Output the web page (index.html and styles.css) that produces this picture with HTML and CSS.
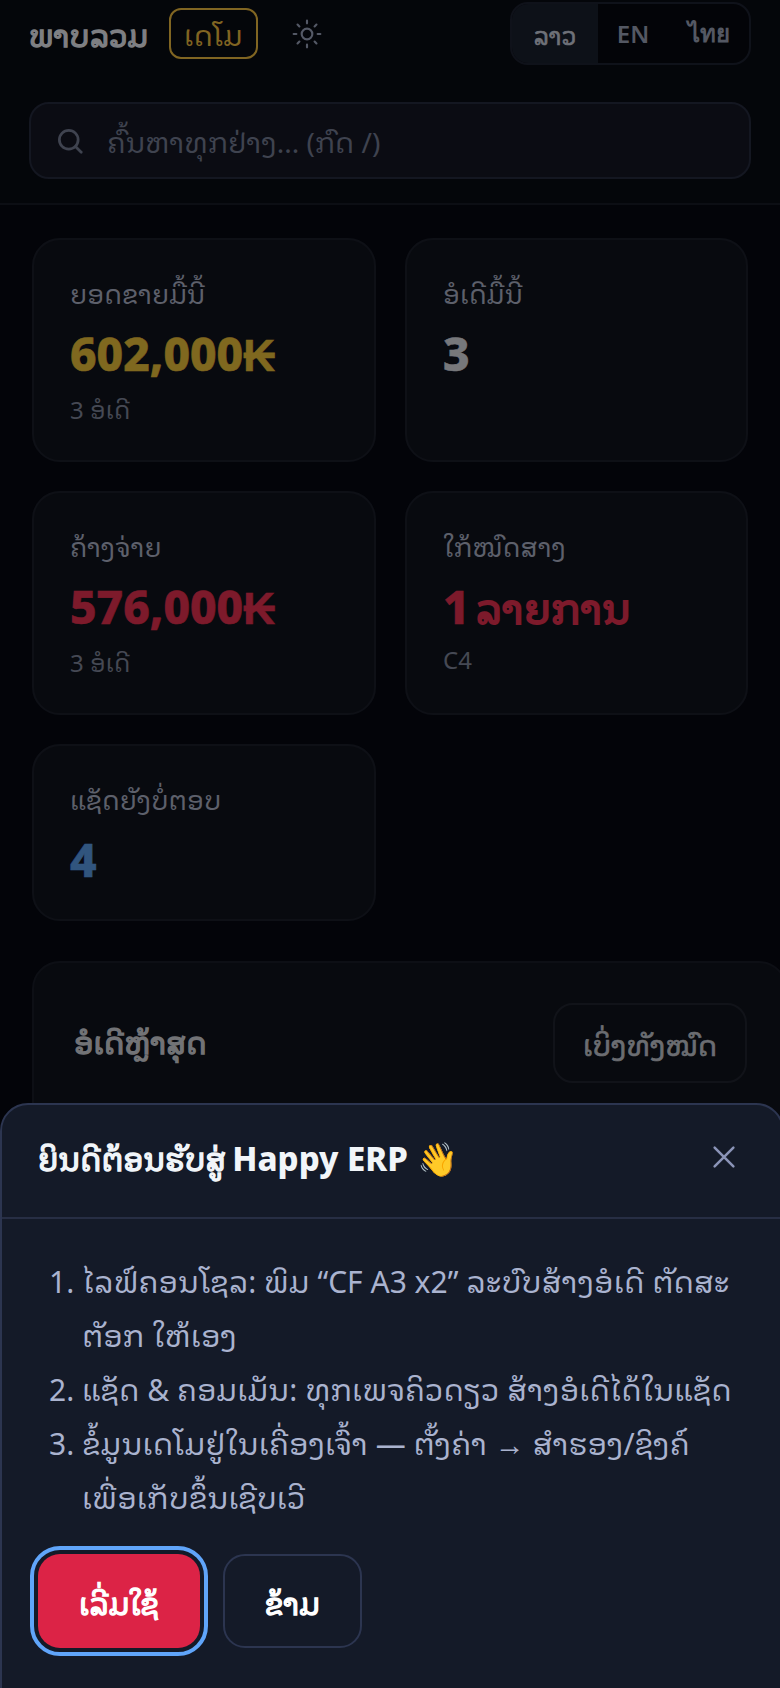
FILE: index.html
```html
<!DOCTYPE html>
<html lang="lo">
<head>
<meta charset="utf-8">
<title>Happy ERP</title>
<link rel="stylesheet" href="styles.css">
</head>
<body>
<div class="page">
  <header class="topbar">
    <div class="toprow">
      <h1 class="title lao-bold">ພາບລວມ</h1>
      <span class="demo">ເດໂມ</span>
      <button class="sun" aria-label="theme">
        <svg viewBox="0 0 24 24" width="32" height="32" fill="none" stroke="currentColor" stroke-width="1.6" stroke-linecap="round"><circle cx="12" cy="12" r="4"/><path d="M12 2v2M12 20v2M4.9 4.9l1.4 1.4M17.7 17.7l1.4 1.4M2 12h2M20 12h2M6.3 17.7l-1.4 1.4M19.1 4.9l-1.4 1.4"/></svg>
      </button>
      <div class="langs">
        <span class="lang active lao-semi">ລາວ</span>
        <span class="lang">EN</span>
        <span class="lang">ไทย</span>
      </div>
    </div>
    <div class="search">
      <svg viewBox="0 0 24 24" width="30" height="30" fill="none" stroke="currentColor" stroke-width="2.2" stroke-linecap="round"><circle cx="11" cy="11" r="7.5"/><path d="M21 21l-4.6-4.6"/></svg>
      <span class="placeholder">ຄົ້ນຫາທຸກຢ່າງ... (ກົດ /)</span>
    </div>
  </header>
  <main class="content">
    <section class="stats">
      <article class="stat tall">
        <div class="label">ຍອດຂາຍມື້ນີ້</div>
        <div class="value gold">602,000<span class="kip">₭</span></div>
        <div class="sub">3 ອໍເດີ</div>
      </article>
      <article class="stat tall">
        <div class="label">ອໍເດີມື້ນີ້</div>
        <div class="value">3</div>
      </article>
      <article class="stat tall">
        <div class="label">ຄ້າງຈ່າຍ</div>
        <div class="value red">576,000<span class="kip">₭</span></div>
        <div class="sub">3 ອໍເດີ</div>
      </article>
      <article class="stat tall">
        <div class="label">ໃກ້ໝົດສາງ</div>
        <div class="value red">1 <span class="value-lao">ລາຍການ</span></div>
        <div class="sub">C4</div>
      </article>
      <article class="stat">
        <div class="label">ແຊັດຍັງບໍ່ຕອບ</div>
        <div class="value blue">4</div>
      </article>
    </section>
    <section class="recent">
      <h2 class="recent-title lao-bold">ອໍເດີຫຼ້າສຸດ</h2>
      <button class="see-all lao-semi">ເບິ່ງທັງໝົດ</button>
    </section>
  </main>
  <div class="scrim"></div>
  <aside class="sheet">
    <div class="sheet-head">
      <h2 class="sheet-title"><span class="sheet-lao">ຍິນດີຕ້ອນຮັບສູ່</span> Happy ERP 👋</h2>
      <button class="close" aria-label="close">
        <svg viewBox="0 0 24 24" width="30" height="30" fill="none" stroke="currentColor" stroke-width="2" stroke-linecap="round"><path d="M4.5 4.5l15 15M19.5 4.5l-15 15"/></svg>
      </button>
    </div>
    <div class="sheet-body">
      <ol class="steps">
        <li>ໄລຟ໌ຄອນໂຊລ: ພິມ “CF A3 x2” ລະບົບສ້າງອໍເດີ ຕັດສະຕັອກ ໃຫ້ເອງ</li>
        <li>ແຊັດ &amp; ຄອມເມັນ: ທຸກເພຈຄິວດຽວ ສ້າງອໍເດີໄດ້ໃນແຊັດ</li>
        <li>ຂໍ້ມູນເດໂມຢູ່ໃນເຄື່ອງເຈົ້າ — ຕັ້ງຄ່າ → ສຳຮອງ/ຊິງຄ໌ ເພື່ອເກັບຂຶ້ນເຊີບເວີ</li>
      </ol>
      <div class="actions">
        <button class="btn primary lao-bold">ເລີ່ມໃຊ້</button>
        <button class="btn ghost lao-bold">ຂ້າມ</button>
      </div>
    </div>
  </aside>
</div>
</body>
</html>
```
FILE: styles.css
```css
* { box-sizing: border-box; }
html, body { margin: 0; padding: 0; height: 100%; overflow: hidden; }
body { background: #060811; color: #e6e8ee; font-family: "Noto Sans Lao Looped", "Noto Sans", sans-serif; }
button { font-family: inherit; background: none; border: 0; padding: 0; color: inherit; }
h1, h2 { margin: 0; font-weight: 400; }
.page { position: relative; width: 780px; height: 1688px; overflow: hidden; }

.lao-bold, .value-lao, .sheet-lao { font-family: "Noto Sans Lao Looped", sans-serif; font-weight: 400; -webkit-text-stroke: .045em currentColor; }
.lao-semi { font-family: "Noto Sans Lao Looped", sans-serif; font-weight: 400; -webkit-text-stroke: .025em currentColor; }

.topbar { height: 205px; padding: 2px 29px 0; border-bottom: 2px solid #171b26; background: #090b13; }
.toprow { display: flex; align-items: center; height: 63px; }
.title { font-size: 30px; color: #e6e8ee; line-height: 1; width: 119px; white-space: nowrap; }
.demo { margin-left: 21px; width: 89px; height: 51px; display: flex; align-items: center; justify-content: center; border: 2px solid #eab93e; border-radius: 12px; color: #eab93e; font-size: 28px; }
.sun { margin-left: 33px; width: 32px; height: 32px; color: #9aa3bb; display: flex; }
.langs { margin-left: auto; width: 241px; height: 63px; display: grid; grid-template-columns: 86px 70px 1fr; border: 2px solid #1d2230; border-radius: 18px; overflow: hidden; background: #070910; }
.lang { display: flex; align-items: center; justify-content: center; font-family: "Noto Sans", sans-serif; font-size: 24px; font-weight: 600; color: #99a0b4; }
.lang.active { background: #191f2d; color: #c9cedb; font-family: "Noto Sans Lao Looped", sans-serif; font-weight: 400; }
.search { margin-top: 37px; height: 77px; display: flex; align-items: center; gap: 22px; padding: 0 24px; border: 2px solid #252a3c; border-radius: 20px; background: #141724; color: #737a90; }
.placeholder { font-size: 28px; color: #737a90; }

.content { padding: 33px 33px 0 32px; }
.stats { display: grid; grid-template-columns: 344px 343px; gap: 29px 29px; }
.stat { height: 177px; padding: 32px 36px; border: 2px solid #1a1e29; border-radius: 28px; background: #10131c; }
.stat.tall { height: 224px; }
.label { font-size: 26px; line-height: 40px; color: #aab0c4; }
.value { margin-top: 11px; font-family: "Noto Sans", sans-serif; font-size: 46px; line-height: 60px; font-weight: 800; color: #d9dbe0; white-space: nowrap; -webkit-text-stroke: .012em currentColor; }
.value-lao { margin-left: -6px; font-size: 41px; }
.kip { font-family: "Liberation Sans", sans-serif; font-size: 44px; }
.value.gold { color: #e7bd3a; }
.value.red { color: #e3304f; }
.value.blue { color: #5a9ce6; }
.sub { margin-top: 5px; font-size: 24px; line-height: 34px; color: #7f8599; }
.recent { margin-top: 40px; margin-right: -40px; height: 400px; padding: 40px 38px 0 40px; display: flex; align-items: flex-start; justify-content: space-between; border: 2px solid #181c27; border-radius: 28px; background: #10131c; }
.recent-title { font-size: 30px; line-height: 76px; color: #d0d2d8; }
.see-all { width: 194px; height: 80px; border: 2px solid #20242f; border-radius: 20px; font-size: 28px; color: #c4c7cf; }

.scrim { position: absolute; inset: 0; background: rgba(0, 0, 0, .45); }
.sheet { position: absolute; left: 0; top: 1103px; width: 784px; height: 600px; border: 2px solid #2c3550; border-radius: 28px 28px 0 0; background: #141a28; }
.sheet-head { height: 114px; padding: 0 43px 8px 36px; display: flex; align-items: center; justify-content: space-between; border-bottom: 2px solid #272e44; }
.sheet-title { font-family: "Noto Sans", sans-serif; font-size: 33px; font-weight: 800; color: #f1f5f9; }
.sheet-lao { font-size: 31px; margin-right: -2px; }
.close { color: #8b94b8; display: flex; }
.sheet-body { padding: 34px 0 0 36px; }
.steps { margin: 0; padding: 0 0 0 44px; width: 714px; font-size: 30px; line-height: 54px; color: #aab3cf; }
.actions { display: flex; gap: 23px; margin-top: 31px; }
.btn { height: 94px; border-radius: 22px; font-size: 30px; color: #fff; }
.btn.primary { width: 162px; background: #dc2346; outline: 4px solid #60a5fa; outline-offset: 4px; }
.btn.ghost { width: 139px; border: 2px solid #2c3550; }
```
